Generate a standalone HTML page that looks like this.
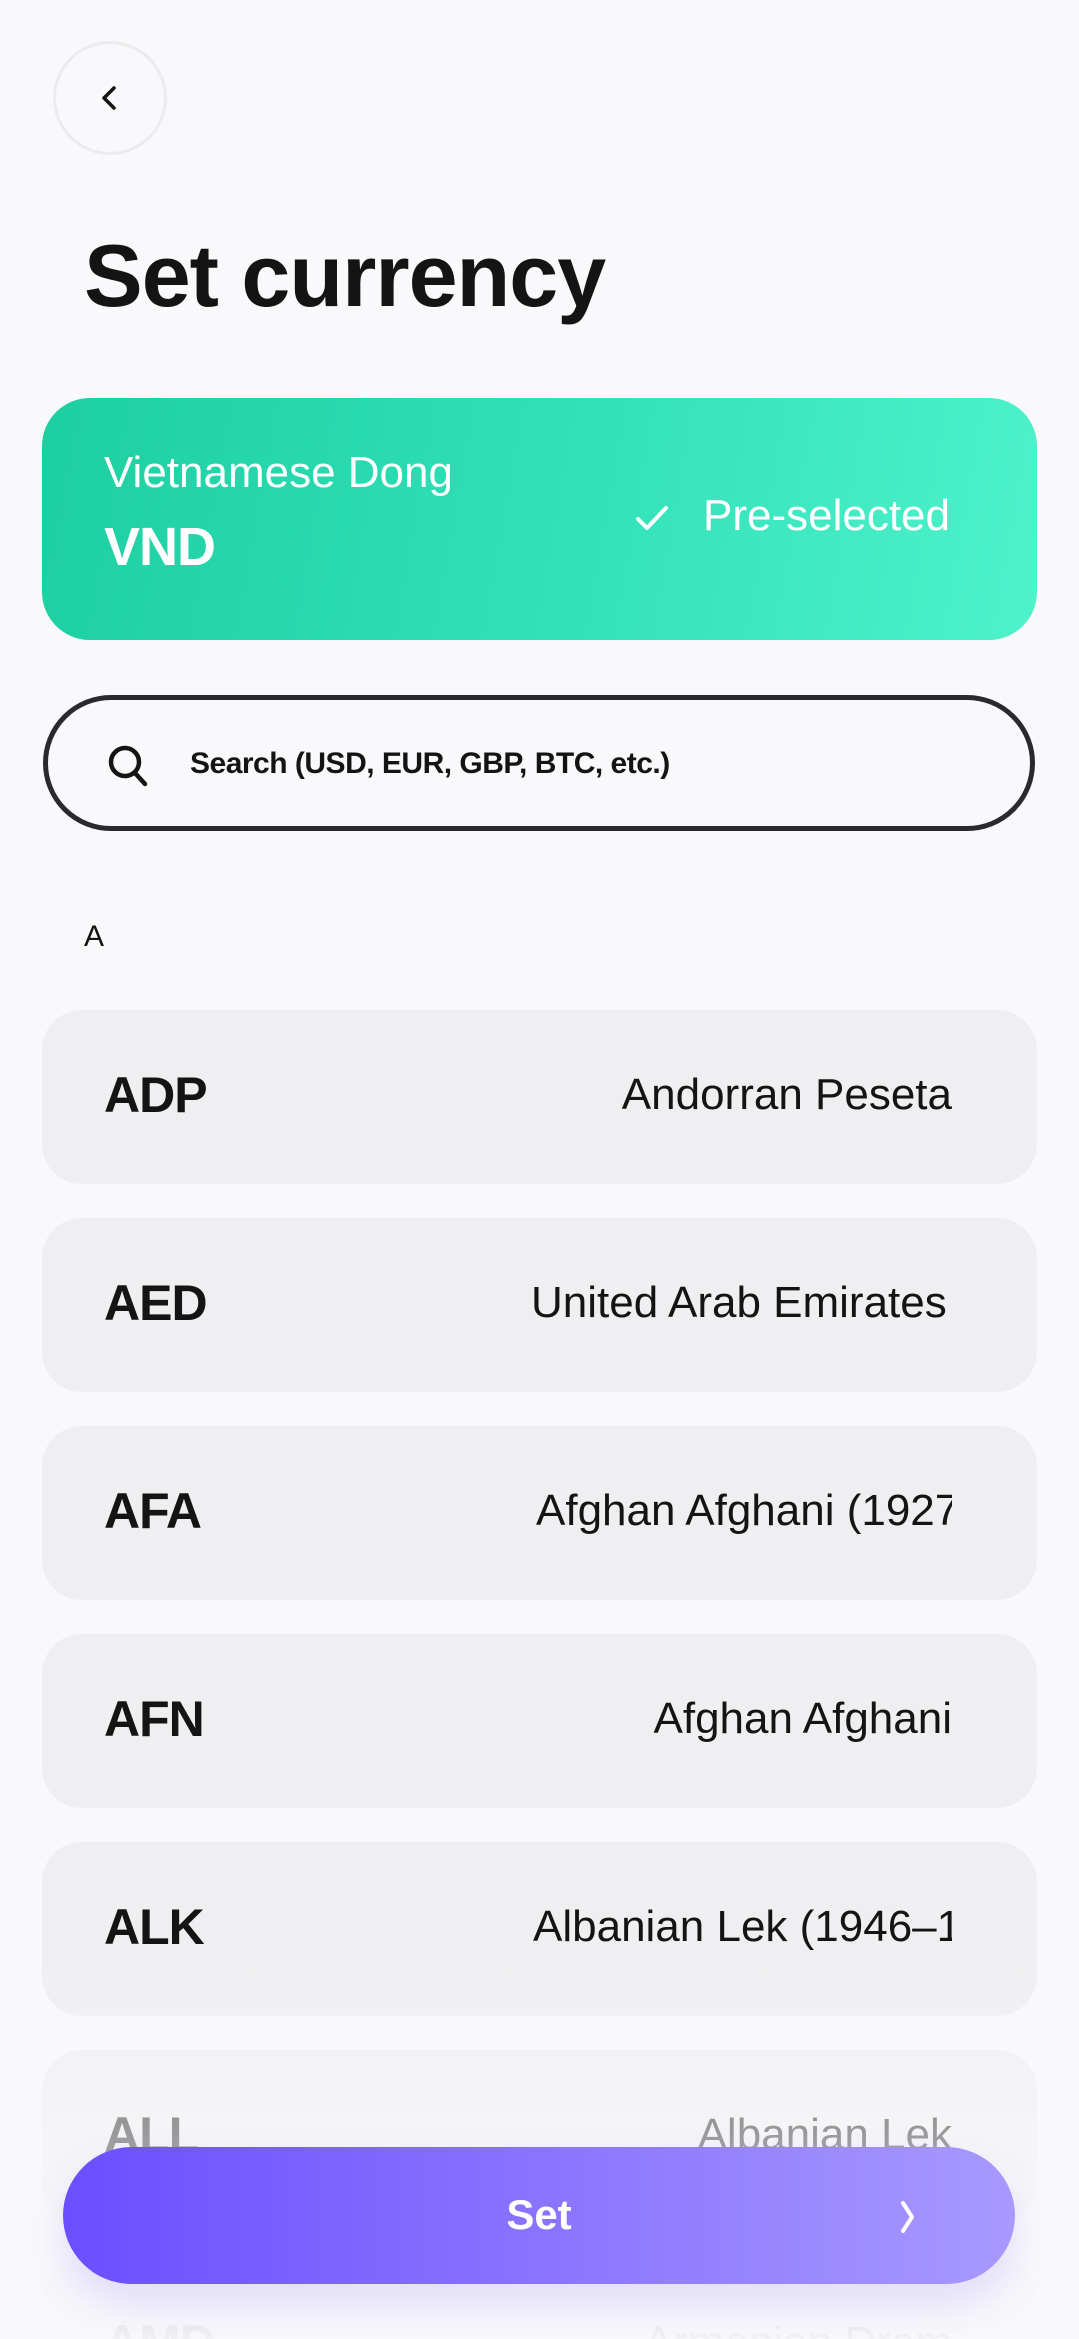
<!DOCTYPE html>
<html><head><meta charset="utf-8"><style>
*{margin:0;padding:0;box-sizing:border-box}
html{width:1079px;height:2339px;overflow:hidden}
body{width:1079px;height:2339px;background:#f9f9fb;font-family:"Liberation Sans",sans-serif;position:relative;overflow:hidden;color:#141414}
.abs{position:absolute}
.back{left:53px;top:41px;width:114px;height:114px;border:3px solid #ececee;border-radius:50%}
.title{left:84px;top:232px;font-size:88px;font-weight:bold;letter-spacing:-1px;line-height:1}
.card{left:42px;top:398px;width:995px;height:242px;border-radius:48px;background:linear-gradient(100deg,#1ccfa0 0%,#30e0b8 50%,#4ef2cb 100%);color:#fff}
.search{left:43px;top:695px;width:992px;height:136px;border:5px solid #2a2a2c;border-radius:68px;background:#f9f9fb}
.row{left:42px;width:995px;height:174px;border-radius:40px;background:#efeff1}
.code{position:absolute;left:62px;top:-2px;line-height:174px;font-size:50px;font-weight:bold;letter-spacing:-1px}
.name{position:absolute;left:489px;width:421px;top:-2px;line-height:174px;font-size:44px;text-align:right;white-space:nowrap;overflow:hidden}
.fade{left:0;top:1960px;width:1079px;height:379px;background:linear-gradient(to bottom,rgba(249,249,251,0),rgba(249,249,251,0.55) 40%,rgba(249,249,251,0.97) 100%)}
.btn{left:63px;top:2147px;width:952px;height:137px;border-radius:69px;background:linear-gradient(90deg,#6b4eff,#a899ff);box-shadow:0 20px 40px rgba(120,100,255,0.18);color:#fff}
</style></head><body>
<div class="abs back"><svg class="abs" style="left:38px;top:38px" width="32" height="32" viewBox="0 0 32 32"><path d="M20 6 L10 16 L20 26" fill="none" stroke="#141414" stroke-width="3.5" stroke-linecap="round" stroke-linejoin="round"/></svg></div>
<div class="abs title">Set currency</div>
<div class="abs card">
 <div class="abs" style="left:62px;top:50px;font-size:44px">Vietnamese Dong</div>
 <div class="abs" style="left:62px;top:118px;font-size:54px;font-weight:bold;letter-spacing:-1px">VND</div>
 <svg class="abs" style="left:590px;top:100px" width="40" height="40" viewBox="0 0 40 40"><path d="M6 21 L15 30 L34 10" fill="none" stroke="#fff" stroke-width="4" stroke-linecap="round" stroke-linejoin="round"/></svg>
 <div class="abs" style="right:87px;top:93px;font-size:44px">Pre-selected</div>
</div>
<div class="abs search">
 <svg class="abs" style="left:58px;top:43px" width="46" height="46" viewBox="0 0 46 46"><circle cx="19" cy="19" r="14" fill="none" stroke="#141414" stroke-width="4.5"/><path d="M29 30 L39 41" stroke="#141414" stroke-width="4.5" stroke-linecap="round"/></svg>
 <div class="abs" style="left:142px;top:47px;font-size:30px;font-weight:bold;letter-spacing:-0.5px">Search (USD, EUR, GBP, BTC, etc.)</div>
</div>
<div class="abs" style="left:84px;top:920px;font-size:30px">A</div>
<div class="abs row" style="top:1010px"><div class="code">ADP</div><div class="name">Andorran Peseta</div></div>
<div class="abs row" style="top:1218px"><div class="code">AED</div><div class="name">United Arab Emirates Dirham</div></div>
<div class="abs row" style="top:1426px"><div class="code">AFA</div><div class="name" style="text-align:left;padding-left:5px">Afghan Afghani (1927–2002)</div></div>
<div class="abs row" style="top:1634px"><div class="code">AFN</div><div class="name">Afghan Afghani</div></div>
<div class="abs row" style="top:1842px"><div class="code">ALK</div><div class="name" style="text-align:left;padding-left:2px">Albanian Lek (1946–1965)</div></div>
<div class="abs row" style="top:2050px"><div class="code">ALL</div><div class="name">Albanian Lek</div></div>
<div class="abs row" style="top:2258px;height:81px;overflow:hidden"><div class="code">AMD</div><div class="name">Armenian Dram</div></div>
<div class="abs fade"></div>
<div class="abs btn">
 <div class="abs" style="left:0;width:952px;text-align:center;top:44px;font-size:42px;font-weight:bold">Set</div>
 <svg class="abs" style="left:830px;top:50px" width="30" height="40" viewBox="0 0 30 40"><path d="M10 6 L19 20 L10 34" fill="none" stroke="#fff" stroke-width="4" stroke-linecap="round" stroke-linejoin="round"/></svg>
</div>
</body></html>
